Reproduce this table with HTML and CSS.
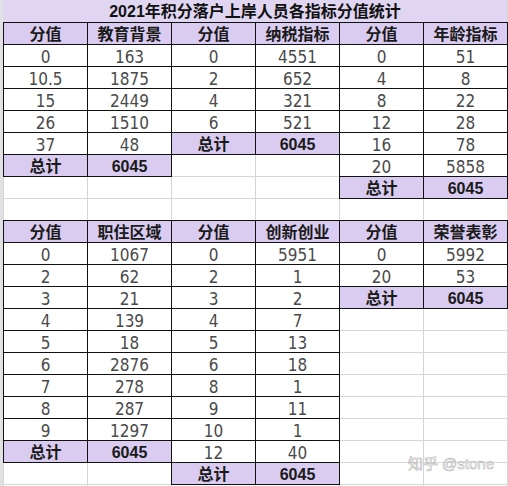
FILE: index.html
```html
<!DOCTYPE html>
<html lang="zh-CN">
<head>
    <meta charset="UTF-8">
    <meta name="viewport" content="width=device-width, initial-scale=1.0">
    <title>2021年积分落户上岸人员各指标分值统计</title>
    <link rel="stylesheet" href="styles.css">
</head>
<body>
    <div class="sheet">
        <div class="title">2021年积分落户上岸人员各指标分值统计</div>

        <div class="block b-edu">
            <div class="hd">分值</div><div class="hd">教育背景</div>
            <div>0</div><div>163</div>
            <div>10.5</div><div>1875</div>
            <div>15</div><div>2449</div>
            <div>26</div><div>1510</div>
            <div>37</div><div>48</div>
            <div class="tot">总计</div><div class="tot">6045</div>
        </div>

        <div class="block b-tax">
            <div class="hd">分值</div><div class="hd">纳税指标</div>
            <div>0</div><div>4551</div>
            <div>2</div><div>652</div>
            <div>4</div><div>321</div>
            <div>6</div><div>521</div>
            <div class="tot">总计</div><div class="tot">6045</div>
        </div>

        <div class="block b-age">
            <div class="hd">分值</div><div class="hd">年龄指标</div>
            <div>0</div><div>51</div>
            <div>4</div><div>8</div>
            <div>8</div><div>22</div>
            <div>12</div><div>28</div>
            <div>16</div><div>78</div>
            <div>20</div><div>5858</div>
            <div class="tot">总计</div><div class="tot">6045</div>
        </div>

        <div class="block b-area">
            <div class="hd">分值</div><div class="hd">职住区域</div>
            <div>0</div><div>1067</div>
            <div>2</div><div>62</div>
            <div>3</div><div>21</div>
            <div>4</div><div>139</div>
            <div>5</div><div>18</div>
            <div>6</div><div>2876</div>
            <div>7</div><div>278</div>
            <div>8</div><div>287</div>
            <div>9</div><div>1297</div>
            <div class="tot">总计</div><div class="tot">6045</div>
        </div>

        <div class="block b-innov">
            <div class="hd">分值</div><div class="hd">创新创业</div>
            <div>0</div><div>5951</div>
            <div>2</div><div>1</div>
            <div>3</div><div>2</div>
            <div>4</div><div>7</div>
            <div>5</div><div>13</div>
            <div>6</div><div>18</div>
            <div>8</div><div>1</div>
            <div>9</div><div>11</div>
            <div>10</div><div>1</div>
            <div>12</div><div>40</div>
            <div class="tot">总计</div><div class="tot">6045</div>
        </div>

        <div class="block b-honor">
            <div class="hd">分值</div><div class="hd">荣誉表彰</div>
            <div>0</div><div>5992</div>
            <div>20</div><div>53</div>
            <div class="tot">总计</div><div class="tot">6045</div>
        </div>

        <div class="watermark">知乎 @stone</div>
    </div>
</body>
</html>
```

FILE: styles.css
```css
body {
    margin: 0;
    background: #fff;
    font-family: "Liberation Sans Narrow", "DejaVu Sans Condensed", "Liberation Sans", sans-serif;
}
.sheet {
    position: relative;
    display: grid;
    grid-template-columns: repeat(6, 84px);
    grid-template-rows: repeat(22, 22px);
    width: 505px;
    height: 486px;
    border-left: 3px solid #e1e1e4;
    background-image:
        linear-gradient(to right, #d6d6d6 1px, transparent 1px),
        linear-gradient(to bottom, #d6d6d6 1px, transparent 1px);
    background-size: 84px 22px;
    overflow: hidden;
}
.title {
    grid-column: 1 / -1;
    grid-row: 1;
    background: #e0d6f2;
    text-align: center;
    font-family: "Liberation Sans", "Noto Sans CJK SC", sans-serif;
    font-weight: bold;
    font-size: 16px;
    line-height: 23px;
    color: #111;
}
.block {
    display: grid;
    grid-template-columns: 83px 83px;
    grid-auto-rows: 21px;
    gap: 1px;
    margin: 0 -1px -1px 0;
    border: 1px solid #111;
    background: #111;
}
.block div {
    background: #fff;
    text-align: center;
    font-size: 17px;
    line-height: 24px;
    color: #4a4a4a;
}
.block .hd,
.block .tot {
    background: #d9ccf0;
    font-family: "Liberation Sans", "Noto Sans CJK SC", sans-serif;
    font-weight: bold;
    font-size: 16px;
    line-height: 23px;
    color: #1a1a1a;
}
.b-edu { grid-column: 1 / 3; grid-row: 2 / 9; }
.b-tax { grid-column: 3 / 5; grid-row: 2 / 8; }
.b-age { grid-column: 5 / 7; grid-row: 2 / 10; }
.b-area { grid-column: 1 / 3; grid-row: 11 / 22; }
.b-innov { grid-column: 3 / 5; grid-row: 11 / 23; }
.b-honor { grid-column: 5 / 7; grid-row: 11 / 15; }
.watermark {
    position: absolute;
    right: 14px;
    top: 452px;
    font-family: "Liberation Sans", "Noto Sans CJK SC", sans-serif;
    font-size: 15px;
    color: #fff;
    -webkit-text-stroke: 0.6px #b8b8b8;
}
```
